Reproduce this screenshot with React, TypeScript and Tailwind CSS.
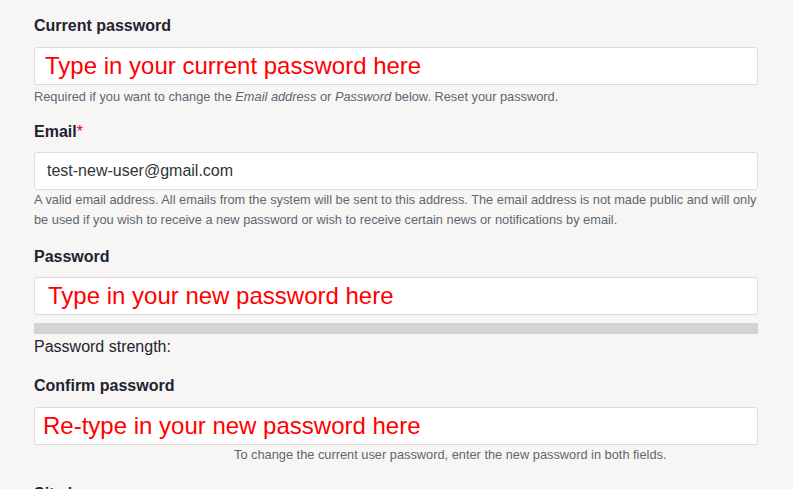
import React from 'react';

const inputClass =
  'block h-[38px] w-full rounded-[3px] border border-[#dcdcdc] bg-white outline-none';

function Label({ children, required }: { children: React.ReactNode; required?: boolean }) {
  return (
    <label className="block text-[16px] leading-[20px] font-bold text-[#222330]">
      {children}
      {required && <span className="font-normal text-[#e00]">*</span>}
    </label>
  );
}

export default function App() {
  return (
    <div className="h-[489px] w-[793px] overflow-hidden bg-[#f7f6f5] font-['Liberation_Sans',Arial,sans-serif]">
      <div className="w-[724px] pt-[16px] ml-[34px]">
        {/* Current password */}
        <Label>Current password</Label>
        <div className="mt-[11px]">
          <div className={`${inputClass} flex items-center pl-[10px]`}>
            <span className="text-[24px] leading-none text-[#ff0000]">
              Type in your current password here
            </span>
          </div>
        </div>
        <p className="mt-[3px] text-[12.8px] leading-[18px] text-[#5f6670]">
          Required if you want to change the <em>Email address</em> or <em>Password</em> below.{' '}
          <a className="text-[#5f6670]">Reset your password.</a>
        </p>

        {/* Email */}
        <div className="mt-[16px]">
          <Label required>Email</Label>
        </div>
        <div className="mt-[10px]">
          <input
            className={`${inputClass} px-[12px] text-[16px] text-[#333]`}
            defaultValue="test-new-user@gmail.com"
          />
        </div>
        <p className="text-[12.8px] leading-[20px] text-[#5f6670]">
          A valid email address. All emails from the system will be sent to this address. The email
          address is not made public and will only be used if you wish to receive a new password or
          wish to receive certain news or notifications by email.
        </p>

        {/* Password */}
        <div className="mt-[17px]">
          <Label>Password</Label>
        </div>
        <div className="mt-[10px]">
          <div className={`${inputClass} flex items-center pl-[13px]`}>
            <span className="text-[24px] leading-none text-[#ff0000]">
              Type in your new password here
            </span>
          </div>
        </div>
        <div className="mt-[8px] h-[11px] w-full bg-[#d3d3d3]" />
        <div className="mt-[3px] text-[16px] leading-[20px] text-[#222330]">Password strength:</div>

        {/* Confirm password */}
        <div className="mt-[19px]">
          <Label>Confirm password</Label>
        </div>
        <div className="mt-[11px]">
          <div className={`${inputClass} flex items-center pl-[8px]`}>
            <span className="text-[24px] leading-none text-[#ff0000]">
              Re-type in your new password here
            </span>
          </div>
        </div>
        <p className="mt-[1px] pl-[200px] text-[12.8px] leading-[18px] text-[#5f6670]">
          To change the current user password, enter the new password in both fields.
        </p>

        {/* Site language */}
        <div className="mt-[20px]">
          <Label>Site language</Label>
        </div>
      </div>
    </div>
  );
}
